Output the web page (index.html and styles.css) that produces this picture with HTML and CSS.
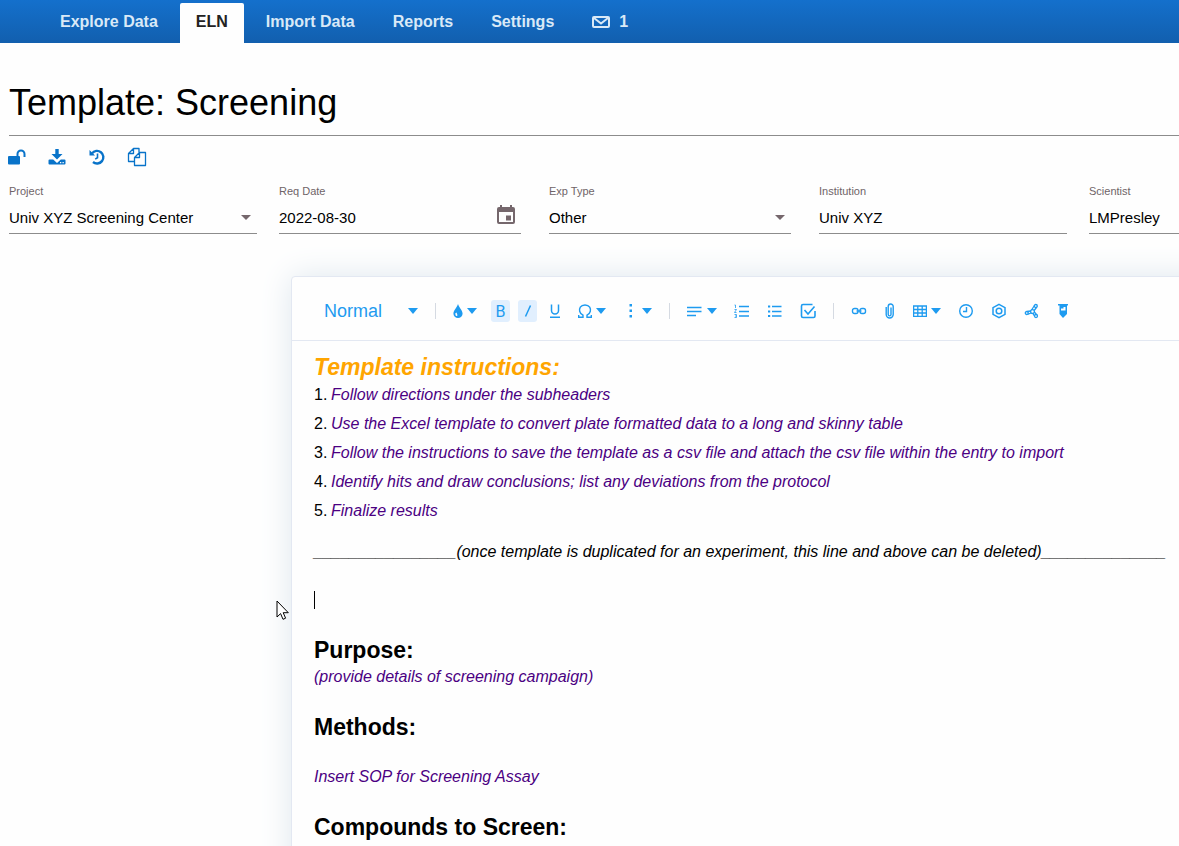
FILE: index.html
```html
<!DOCTYPE html>
<html lang="en">
<head>
    <meta charset="UTF-8">
    <meta name="viewport" content="width=device-width, initial-scale=1.0">
    <title>Template: Screening</title>
    <link rel="stylesheet" href="styles.css">
</head>
<body>
    <nav class="navbar">
        <a class="nav-link" href="#">Explore Data</a>
        <a class="nav-link active" href="#">ELN</a>
        <a class="nav-link" href="#">Import Data</a>
        <a class="nav-link" href="#">Reports</a>
        <a class="nav-link" href="#">Settings</a>
        <a class="nav-link messages" href="#">
            <svg width="18" height="12" viewBox="0 0 18 12" fill="none" stroke="currentColor" stroke-width="2"><rect x="1" y="1" width="16" height="10" rx="1"/><path d="M2 2l7 5.500L16 2"/></svg>
            1
        </a>
    </nav>

    <main class="page">
        <h1 class="title">Template: Screening</h1>

        <div class="actions">
            <button class="action" aria-label="Unlock">
                <svg width="18" height="16" viewBox="0 0 18 16"><rect x="0" y="7" width="12" height="8.500" rx="1" fill="currentColor"/><path d="M9.500 8V5a3.500 3.500 0 0 1 7 0v3" fill="none" stroke="currentColor" stroke-width="2"/></svg>
            </button>
            <button class="action" aria-label="Download">
                <svg width="18" height="18" viewBox="0 0 18 18" fill="currentColor"><path d="M7.300 1h3.400v5h3.800L9 11.500 3.500 6h3.800z"/><path d="M1.500 11.500h3.700L9 15l3.800-3.500h3.700q1 0 1 1v3q0 1-1 1h-15q-1 0-1-1v-3q0-1 1-1zM12 14v1.200h1.300V14zm2.500 0v1.200h1.300V14z" fill-rule="evenodd"/></svg>
            </button>
            <button class="action" aria-label="History">
                <svg width="18" height="18" viewBox="0 0 18 18" fill="none" stroke="currentColor" stroke-width="2.400"><path d="M4 5.400A6.300 6.300 0 1 1 5 14"/><path d="M1.500 2v5.500h5.500z" fill="currentColor" stroke="none"/><path d="M9.500 5.500v4.200l-2.300 1.500" stroke-width="1.600"/></svg>
            </button>
            <button class="action" aria-label="Copy">
                <svg width="20" height="20" viewBox="0 0 20 20" fill="none" stroke="currentColor" stroke-width="1.300" stroke-linejoin="round"><path d="M7.500 14.500H1.500V6.500L6.500 1.500H12V5.500M6.500 1.500V6.500H1.500"/><path d="M12.500 5.500H18.500V18.500H7.500V10.500zM12.500 5.500V10.500H7.500"/></svg>
            </button>
        </div>

        <form class="fields">
            <div class="field">
                <label for="project">Project</label>
                <div class="control">
                    <select id="project"><option>Univ XYZ Screening Center</option></select>
                    <svg class="field-arrow" width="10" height="5" viewBox="0 0 10 5"><path d="M0 0h10L5 5z"/></svg>
                </div>
            </div>
            <div class="field narrow">
                <label for="req-date">Req Date</label>
                <div class="control">
                    <input type="text" id="req-date" value="2022-08-30">
                    <button class="calendar" type="button" aria-label="Pick date">
                        <svg width="18" height="20" viewBox="0 0 18 20"><path fill-rule="evenodd" d="M3 0h2v2h8V0h2v2h1q2 0 2 2v13q0 2-2 2H2q-2 0-2-2V4q0-2 2-2h1zM2 7v10h14V7z"/><path d="M9 10.500h5v5H9z"/></svg>
                    </button>
                </div>
            </div>
            <div class="field narrow">
                <label for="exp-type">Exp Type</label>
                <div class="control">
                    <select id="exp-type"><option>Other</option></select>
                    <svg class="field-arrow" width="10" height="5" viewBox="0 0 10 5"><path d="M0 0h10L5 5z"/></svg>
                </div>
            </div>
            <div class="field">
                <label for="institution">Institution</label>
                <div class="control">
                    <input type="text" id="institution" value="Univ XYZ">
                </div>
            </div>
            <div class="field">
                <label for="scientist">Scientist</label>
                <div class="control">
                    <input type="text" id="scientist" value="LMPresley">
                </div>
            </div>
        </form>

        <section class="editor">
            <div class="toolbar">
                <div class="block-type">
                    <select aria-label="Text style"><option>Normal</option></select>
                    <svg width="10" height="6" viewBox="0 0 10 6" fill="currentColor"><path d="M0 0h10L5 6z"/></svg>
                </div>
                <span class="divider"></span>
                <div class="tools">
                    <button class="tool" aria-label="Color">
                        <svg width="10" height="14" viewBox="0 0 10 14" fill="currentColor"><path fill-rule="evenodd" d="M5 0C6 3.500 9.600 6.500 9.600 9.600A4.600 4.400 0 0 1 .4 9.600C.4 6.500 4 3.500 5 0zM3.500 8.500a1.200 1.700 0 1 0 1 2.800z"/></svg>
                        <svg width="10" height="6" viewBox="0 0 10 6" fill="currentColor"><path d="M0 0h10L5 6z"/></svg>
                    </button>
                    <div class="toggles">
                        <button class="toggle on" aria-label="Bold">B</button>
                        <button class="toggle on" aria-label="Italic">
                            <svg width="8" height="12" viewBox="0 0 8 12" fill="none" stroke="currentColor" stroke-width="1.500"><path d="M6.500 0.500L1.500 11.500"/></svg>
                        </button>
                        <button class="toggle" aria-label="Underline">
                            <svg width="12" height="14" viewBox="0 0 12 14" fill="none" stroke="currentColor" stroke-width="1.500"><path d="M2.500 0.500V6.500a3.500 3.500 0 0 0 7 0V.5M1 13.300h10"/></svg>
                        </button>
                    </div>
                    <button class="tool" aria-label="Special characters">
                        <svg width="14" height="14" viewBox="0 0 14 14" fill="none" stroke="currentColor" stroke-width="1.400"><path d="M.7 11v2.300H5V11.200C1 9 1 5.500 2.300 3.200 4.200.2 9.800.2 11.700 3.200 13 5.500 13 9 9 11.200v2.100h4.300V11"/></svg>
                        <svg width="10" height="6" viewBox="0 0 10 6" fill="currentColor"><path d="M0 0h10L5 6z"/></svg>
                    </button>
                    <button class="tool" aria-label="More">
                        <svg width="18" height="14" viewBox="0 0 18 14" fill="currentColor"><path d="M9.500 0h2.500v2.500H9.500zM9.500 5.500h2.500V8H9.500zM9.500 11h2.500v2.500H9.500z"/></svg>
                        <svg width="10" height="6" viewBox="0 0 10 6" fill="currentColor"><path d="M0 0h10L5 6z"/></svg>
                    </button>
                </div>
                <span class="divider"></span>
                <div class="tools wide">
                    <button class="tool" aria-label="Align">
                        <svg width="16" height="12" viewBox="0 0 16 12" fill="none" stroke="currentColor" stroke-width="1.500"><path d="M0 2.500h14.500M0 6.500h14.500M0 10.500h9"/></svg>
                        <svg width="10" height="6" viewBox="0 0 10 6" fill="currentColor"><path d="M0 0h10L5 6z"/></svg>
                    </button>
                    <button class="tool" aria-label="Numbered list">
                        <svg width="16" height="14" viewBox="0 0 16 14" fill="none" stroke="currentColor" stroke-width="1.300"><path d="M5 2.500h10M5 7.500h10M5 12h10"/><path d="M.5 1h1v3M.5 5.500h2l-2 3h2M.5 10.500h2v3h-2M1 12h1" stroke-width="0.800"/></svg>
                    </button>
                    <button class="tool" aria-label="Bullet list">
                        <svg width="16" height="14" viewBox="0 0 16 14" fill="none" stroke="currentColor" stroke-width="1.300"><path d="M5 2.500h9.500M5 7.500h9.500M5 12h9.500"/><path d="M1 2.500h2.200M1 7.500h2.200M1 12h2.200" stroke-width="2"/></svg>
                    </button>
                    <button class="tool" aria-label="Checklist">
                        <svg width="16" height="16" viewBox="0 0 16 16" fill="none" stroke="currentColor" stroke-width="1.600"><path d="M12.500 1.500H3q-1.500 0-1.500 1.500v10q0 1.500 1.500 1.500h10.500q1.500 0 1.500-1.500V8"/><path d="M4.500 7l3.500 4 6.500-7.500"/></svg>
                    </button>
                </div>
                <span class="divider"></span>
                <div class="tools wide">
                    <button class="tool" aria-label="Link">
                        <svg width="16" height="8" viewBox="0 0 16 8" fill="none" stroke="currentColor" stroke-width="1.400"><rect x="1.500" y="1.500" width="5.500" height="5" rx="2"/><rect x="9" y="1.500" width="5.500" height="5" rx="2"/><path d="M5.500 4h5"/></svg>
                    </button>
                    <button class="tool" aria-label="Attach file">
                        <svg width="12" height="16" viewBox="0 0 12 16" fill="none" stroke="currentColor" stroke-width="1.400"><path d="M2.200 4v7.500a3.500 3.500 0 0 0 7 0V3.500a2.500 2.500 0 0 0-5 0v8a1.400 1.400 0 0 0 2.800 0V4.500"/></svg>
                    </button>
                    <button class="tool" aria-label="Table">
                        <svg width="14" height="12" viewBox="0 0 14 12" fill="none" stroke="currentColor" stroke-width="1.300"><path d="M.6 1h12.800v10.400H.6zM.6 4.500h12.800M.6 8h12.800M4.800 1v10.400M9.200 1v10.400"/></svg>
                        <svg width="10" height="6" viewBox="0 0 10 6" fill="currentColor"><path d="M0 0h10L5 6z"/></svg>
                    </button>
                    <button class="tool" aria-label="Timestamp">
                        <svg width="16" height="16" viewBox="0 0 16 16" fill="none" stroke="currentColor" stroke-width="1.400"><circle cx="8" cy="8" r="6.300"/><path d="M8.500 4v4.500H5"/></svg>
                    </button>
                    <button class="tool" aria-label="Chemistry">
                        <svg width="16" height="16" viewBox="0 0 16 16" fill="none" stroke="currentColor" stroke-width="1.500"><path d="M8 1.300l6 3.300v6.800l-6 3.300-6-3.300V4.600z"/><circle cx="8" cy="8" r="2.800"/></svg>
                    </button>
                    <button class="tool" aria-label="Molecule">
                        <svg width="16" height="16" viewBox="0 0 16 16" fill="none" stroke="currentColor" stroke-width="1.300"><circle cx="8.500" cy="8.500" r="1.900"/><circle cx="11.800" cy="3" r="1.500"/><circle cx="2.800" cy="10" r="1.500"/><circle cx="12" cy="13" r="1.500"/><path d="M7.500 7l3-4.500M10.200 7.500l2.600-3.500M6.700 8L3 8.500M7 10l-3.500 1.300M8.800 10.300l1.700 2.700M10.400 8.800l2.400 3"/></svg>
                    </button>
                    <button class="tool" aria-label="Highlighter">
                        <svg width="14" height="16" viewBox="0 0 14 16" fill="currentColor"><path fill-rule="evenodd" d="M1 1h10v1.500h-1V11L6 15l-3.500-4V2.500H1zM4 4v3.500h4.500V4z"/><path d="M4 5.500h2.500V4H4z"/></svg>
                    </button>
                </div>
            </div>

            <article class="document">
                <h2 class="instructions">Template instructions:</h2>
                <ol class="steps">
                    <li>Follow directions under the subheaders</li>
                    <li>Use the Excel template to convert plate formatted data to a long and skinny table</li>
                    <li>Follow the instructions to save the template as a csv file and attach the csv file within the entry to import</li>
                    <li>Identify hits and draw conclusions; list any deviations from the protocol</li>
                    <li>Finalize results</li>
                </ol>
                <p class="separator">________________(once template is duplicated for an experiment, this line and above can be deleted)______________</p>
                <p class="blank"><span class="caret"></span></p>
                <h2>Purpose:</h2>
                <p class="hint">(provide details of screening campaign)</p>
                <h2>Methods:</h2>
                <p class="hint spaced">Insert SOP for Screening Assay</p>
                <h2>Compounds to Screen:</h2>
            </article>
        </section>
    </main>

    <svg class="pointer" width="14" height="21" viewBox="0 0 14 21"><path d="M1 1v16l3.600-3.400L7 19.300l2.600-1.100L7.200 12.700H12.300z" fill="#fff" stroke="#000"/></svg>
</body>
</html>
```
FILE: styles.css
```css
* {
    box-sizing: border-box;
}
body {
    display: flex;
    flex-direction: column;
    height: 100vh;
    margin: 0;
    overflow: hidden;
    background-color: #fefefe;
    font-family: "Liberation Sans", Arial, sans-serif;
    color: #000;
}
button, input, select {
    margin: 0;
    padding: 0;
    border: none;
    outline: none;
    background: none;
    font-family: inherit;
    color: inherit;
    appearance: none;
}
svg {
    display: block;
    flex: none;
}

/* Top navigation */
.navbar {
    display: flex;
    flex: none;
    gap: 6px;
    padding: 3px 44px 0;
    background: linear-gradient(#1470cc, #125fae);
}
.nav-link {
    display: flex;
    align-items: center;
    padding: 9px 16px 11px;
    border-radius: 2px 2px 0 0;
    font-size: 16px;
    font-weight: bold;
    line-height: 20px;
    color: #d9e9f7;
    text-decoration: none;
    white-space: nowrap;
}
.nav-link.active {
    background-color: #fefefe;
    color: #222;
}
.messages {
    gap: 9px;
}

/* Page header */
.page {
    flex: 1;
    min-height: 0;
    padding-left: 9px;
    overflow: hidden;
}
.title {
    margin: 0;
    padding: 38px 0 10px;
    border-bottom: 1px solid #8c8c8c;
    font-size: 36px;
    font-weight: normal;
    line-height: 44px;
}
.actions {
    display: flex;
    gap: 20px;
    padding-top: 11px;
    margin-left: -2px;
}
.action {
    display: flex;
    align-items: center;
    justify-content: center;
    width: 20px;
    height: 20px;
    color: #0873c9;
}

/* Entry details */
.fields {
    display: grid;
    grid-template-columns: repeat(5, minmax(270px, 1fr));
    padding-top: 16px;
}
.field {
    padding-right: 22px;
}
.field.narrow {
    padding-right: 28px;
}
.field label {
    display: block;
    font-size: 11px;
    line-height: 16px;
    color: #6f6468;
}
.control {
    display: flex;
    align-items: center;
    height: 35px;
    padding: 2px 6px 0 0;
    border-bottom: 1px solid #8c8c8c;
}
.control input, .control select {
    flex: 1;
    min-width: 0;
    height: 32px;
    font-size: 15px;
}
.calendar svg {
    margin-bottom: 4px;
}
.field-arrow, .calendar {
    fill: #75676c;
}

/* Editor */
.editor {
    height: 100%;
    margin: 42px -40px 0 282px;
    border: 1px solid #e3e8f2;
    border-radius: 4px;
    background-color: #fefefe;
    box-shadow: 0 0 32px #dfe8ef;
}
.toolbar {
    display: flex;
    align-items: center;
    padding: 23px 32px 18px;
    border-bottom: 1px solid #e3e8f2;
    color: #1e9bf0;
}
.block-type {
    display: flex;
    align-items: center;
    width: 94px;
}
.block-type select {
    flex: 1;
    min-width: 0;
    height: 22px;
    font-size: 18px;
}
.divider {
    width: 1px;
    height: 16px;
    margin: 0 17px;
    background-color: #d5dae2;
}
.tools {
    display: flex;
    align-items: center;
    gap: 14px;
}
.tools.wide {
    gap: 17px;
}
.tool {
    display: flex;
    align-items: center;
    gap: 4px;
}
.toggles {
    display: flex;
    gap: 8px;
}
.toggle {
    display: flex;
    align-items: center;
    justify-content: center;
    width: 19px;
    height: 22px;
    border-radius: 3px;
    font-family: Roboto, sans-serif;
    font-size: 16px;
}
.toggle.on {
    background-color: #e1effe;
}

/* Document text */
.document {
    padding: 13px 22px;
    font-size: 16px;
    line-height: 22px;
}
.document h2 {
    margin: 26px 0 0;
    font-size: 23px;
    line-height: 26px;
}
.document p {
    margin: 0;
}
.document .instructions {
    margin: 0;
    font-style: italic;
    color: #ffa500;
}
.steps {
    margin: 0 0 16px;
    padding: 0;
    list-style: none;
    counter-reset: step;
}
.steps li {
    display: flex;
    line-height: 29px;
    font-style: italic;
    color: #4b0082;
    white-space: nowrap;
    counter-increment: step;
}
.steps li::before {
    content: counter(step) ".";
    width: 17px;
    font-style: normal;
    color: #000;
}
.document .separator {
    margin-bottom: 26px;
    font-style: italic;
    white-space: nowrap;
}
.document .hint {
    margin-top: 3px;
    font-style: italic;
    color: #4b0082;
}
.document .spaced {
    margin-top: 26px;
}
.blank {
    display: flex;
    align-items: center;
    height: 22px;
}
.caret {
    width: 1px;
    height: 18px;
    background-color: #000;
}

/* Mouse pointer lying over the page */
.pointer {
    position: absolute;
    top: 600px;
    left: 276px;
}
```
